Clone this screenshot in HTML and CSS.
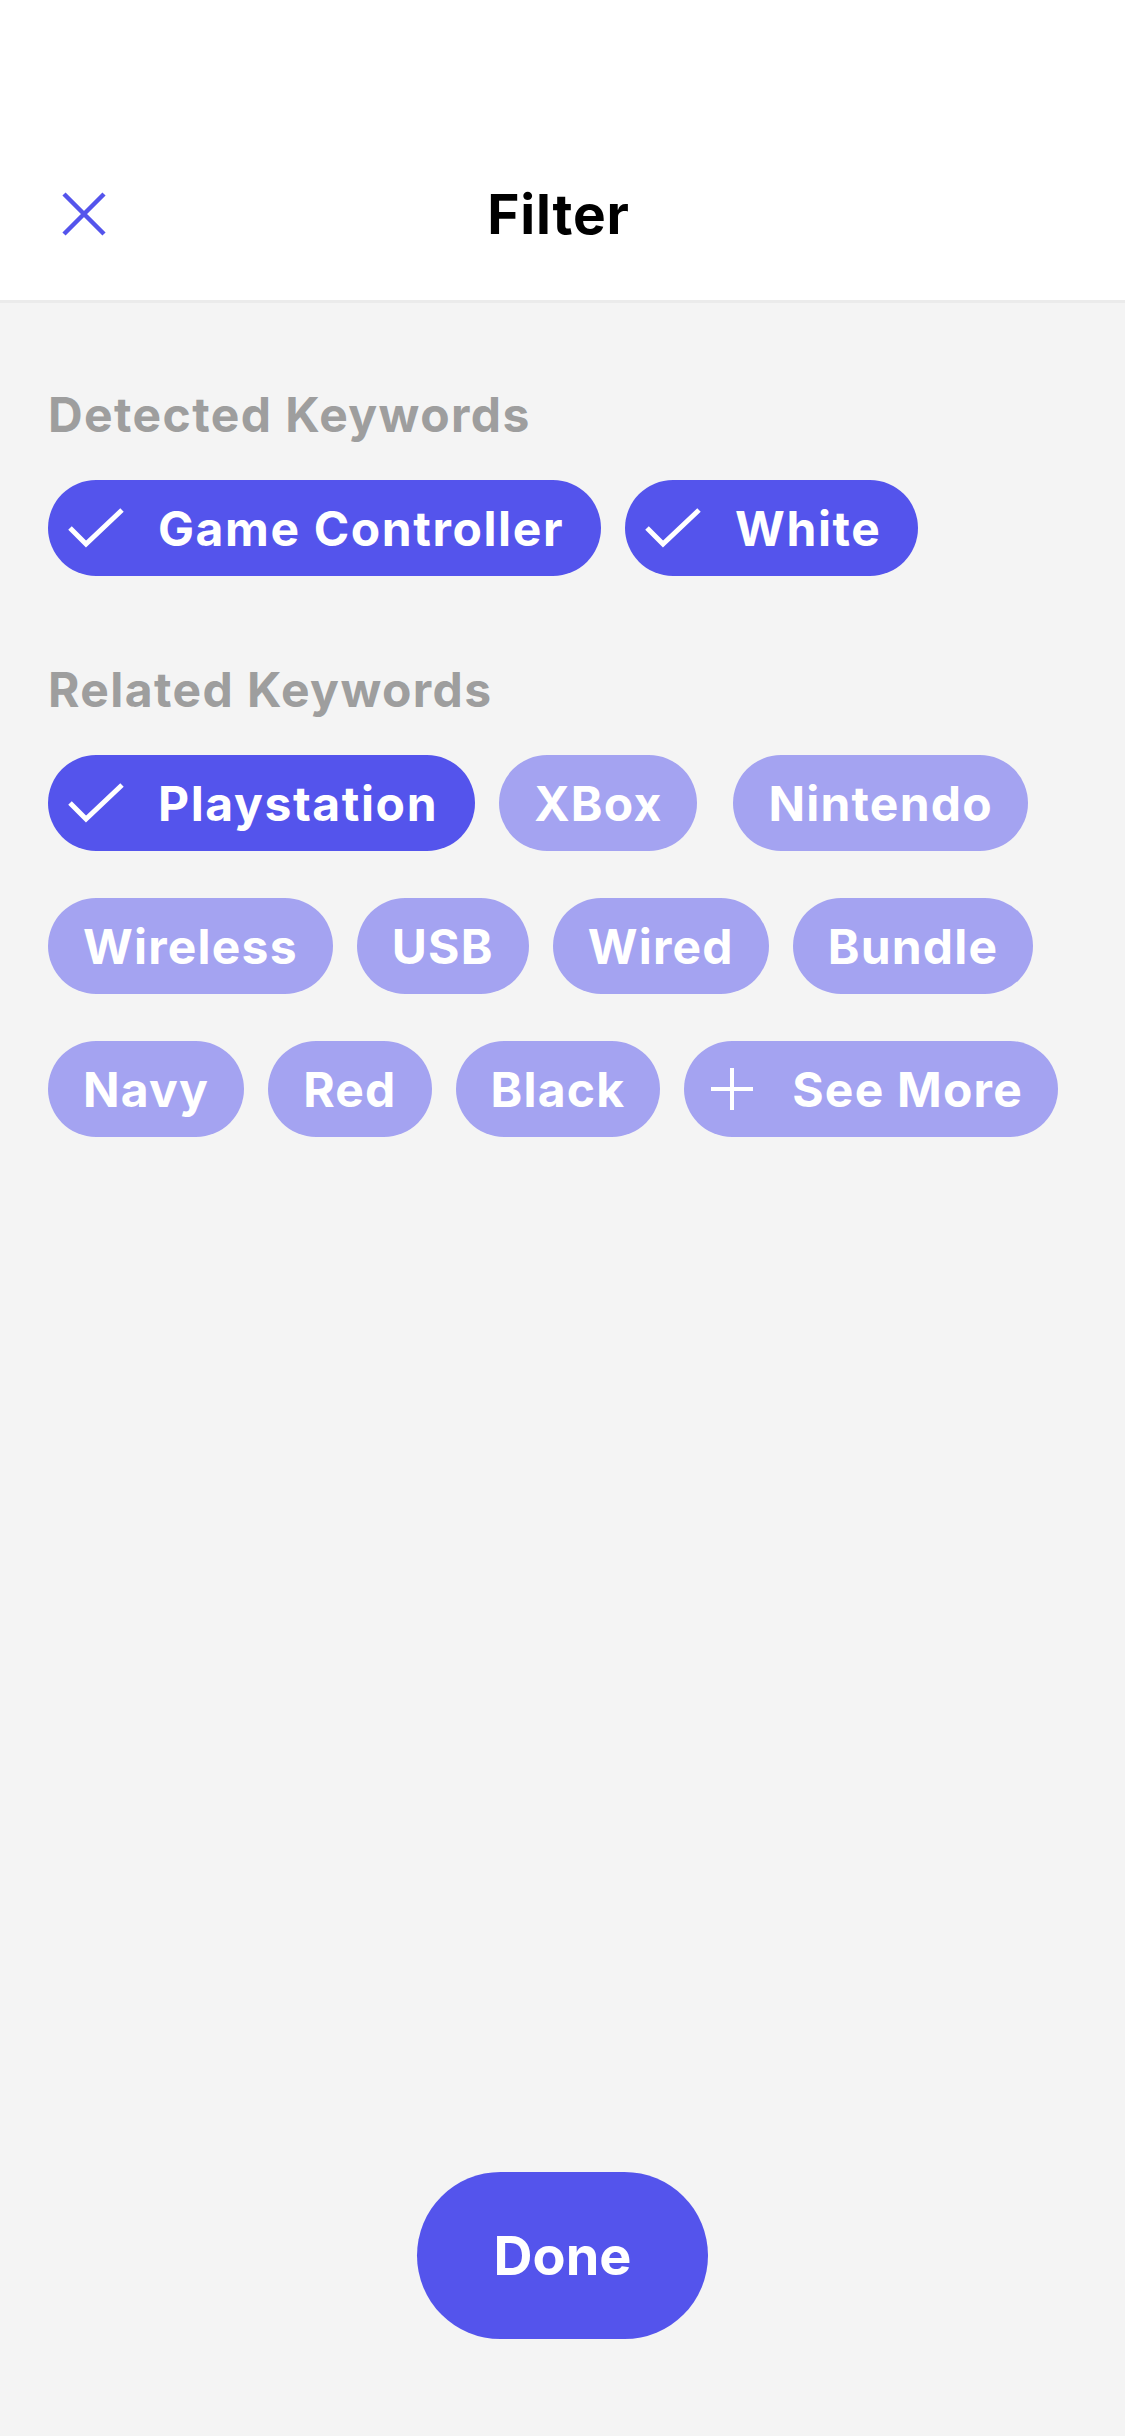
FILE: index.html
```html
<!DOCTYPE html>
<html lang="en">
<head>
  <meta charset="UTF-8" />
  <title>Filter</title>
  <link rel="stylesheet" href="styles.css">
</head>
<body>

  <header class="header">
    <div class="nav">
      <button class="close" aria-label="Close">
        <svg width="44" height="44" viewBox="0 0 44 44">
          <path d="M2 2 L42 42 M42 2 L2 42" stroke="#5454ec" stroke-width="4.5" fill="none" />
        </svg>
      </button>
      <h1 class="title">Filter</h1>
    </div>
  </header>

  <main class="content">
    <h2 class="label">Detected Keywords</h2>
    <div class="chips">
      <span class="chip selected has-icon">
        <svg class="icon" width="56" height="56" viewBox="0 0 56 56"><polyline points="2,36 18,52 54,18" transform="translate(0,-8)" stroke="#fff" stroke-width="5" fill="none" /></svg>
        Game Controller
      </span>
      <span class="chip selected has-icon">
        <svg class="icon" width="56" height="56" viewBox="0 0 56 56"><polyline points="2,36 18,52 54,18" transform="translate(0,-8)" stroke="#fff" stroke-width="5" fill="none" /></svg>
        White
      </span>
    </div>

    <h2 class="label related">Related Keywords</h2>
    <div class="chips">
      <span class="chip selected has-icon">
        <svg class="icon" width="56" height="56" viewBox="0 0 56 56"><polyline points="2,36 18,52 54,18" transform="translate(0,-8)" stroke="#fff" stroke-width="5" fill="none" /></svg>
        Playstation
      </span>
      <span class="chip wide-gap">XBox</span>
      <span class="chip">Nintendo</span>
      <span class="chip">Wireless</span>
      <span class="chip">USB</span>
      <span class="chip">Wired</span>
      <span class="chip">Bundle</span>
      <span class="chip">Navy</span>
      <span class="chip">Red</span>
      <span class="chip">Black</span>
      <span class="chip has-icon more">
        <svg class="icon" width="56" height="56" viewBox="0 0 56 56"><path d="M28 7 V49 M7 28 H49" stroke="#fff" stroke-width="4" fill="none" /></svg>
        See More
      </span>
    </div>
  </main>

  <footer class="footer">
    <button class="done">Done</button>
  </footer>

</body>
</html>
```

FILE: styles.css
```css
body {
  font-family: Inter, 'Noto Sans', sans-serif;
  background: #f4f4f4;
  margin: 0;
  min-height: 100vh;
  display: flex;
  flex-direction: column;
  color: #000;
}

.header {
  background: #fff;
  border-bottom: 3px solid #ebebeb;
  padding-top: 128px;
}

.nav {
  height: 172px;
  display: flex;
  align-items: center;
  justify-content: center;
  position: relative;
}

.close {
  position: absolute;
  left: 62px;
  top: 64px;
  width: 44px;
  height: 44px;
  padding: 0;
  border: none;
  background: none;
  cursor: pointer;
}

.close svg {
  display: block;
}

.title {
  margin: 0 8px 0 0;
  font-size: 55px;
  font-weight: 700;
  line-height: 64px;
  letter-spacing: 0.8px;
}

.content {
  flex: 1;
  padding: 84px 48px 0;
}

.label {
  margin: 0 0 37px;
  font-size: 48px;
  font-weight: 700;
  line-height: 56px;
  letter-spacing: 1.4px;
  color: #9e9e9e;
}

.label.related {
  margin-top: 86px;
}

.chips {
  display: flex;
  flex-wrap: wrap;
  column-gap: 24px;
  row-gap: 47px;
}

.chip {
  height: 96px;
  padding: 0 35px;
  border-radius: 48px;
  background: #a4a3f1;
  color: #fff;
  font-size: 48px;
  font-weight: 700;
  letter-spacing: 1.2px;
  display: flex;
  align-items: center;
  box-sizing: border-box;
}

.chip.selected {
  background: #5454ec;
  padding-right: 37px;
  letter-spacing: 1.6px;
}

.chip.has-icon {
  padding-left: 20px;
  gap: 34px;
}

.chip.more {
  gap: 32px;
}

.chip.wide-gap {
  margin-right: 12px;
}

.icon {
  display: block;
  flex-shrink: 0;
}

.footer {
  display: flex;
  justify-content: center;
  padding-bottom: 97px;
}

.done {
  width: 291px;
  height: 167px;
  border: none;
  border-radius: 84px;
  background: #5454ec;
  color: #fff;
  font-family: Inter, 'Noto Sans', sans-serif;
  font-size: 54px;
  font-weight: 700;
  cursor: pointer;
}
```
